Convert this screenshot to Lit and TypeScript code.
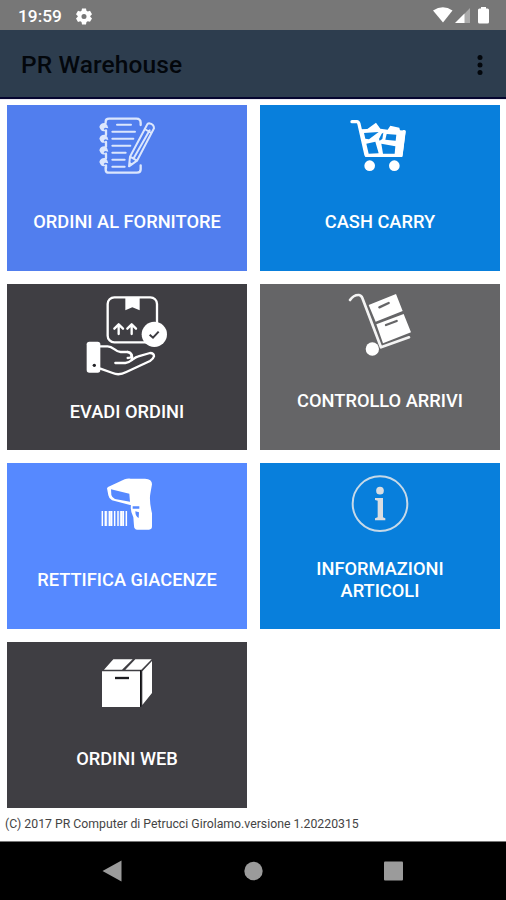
import { LitElement, html, css, svg, TemplateResult } from "lit";
import { customElement } from "lit/decorators.js";
import { classMap } from "lit/directives/class-map.js";

interface Tile {
  label: string;
  tone: string;
  view: string;
  art: TemplateResult;
  low?: boolean;
}

const notebook = svg`
  <g fill="none" stroke="#dbe6fd" stroke-width="7" stroke-linecap="round" stroke-linejoin="round">
    <path d="M77 54V50Q77 41 87 41H169Q182 41 182 54V60M77 188V194Q77 203 87 203H171Q182 203 182 193V181"/>
    <path d="M111 59H153M97 80H165M97 101H160M97 122H151M97 143H137M97 164H134M97 185H134" stroke-width="6"/>
    <path d="M202 58L150 155L147 184L171 167L222 70Q222 57 207 55Q203 55 202 58ZM194 72L214 84M209 76L161 160M150 155L171 167" stroke-width="6"/>
    <path d="M78 76V90M78 111V125M78 146V160M78 181V190"/>
  </g>
  <path d="M147 185L149 171L159 177Z" fill="#dbe6fd"/>
  <g fill="#dbe6fd">
    <path d="M58 66Q61 53 75 54Q83 58 85 70L75 68L71 72L77 77Q64 83 58 66Z"/>
    <path d="M58 101Q61 88 75 89Q83 93 85 105L75 103L71 107L77 112Q64 118 58 101Z"/>
    <path d="M58 136Q61 123 75 124Q83 128 85 140L75 138L71 142L77 147Q64 153 58 136Z"/>
    <path d="M58 171Q61 158 75 159Q83 163 85 175L75 173L71 177L77 182Q64 188 58 171Z"/>
  </g>`;

const cart = svg`
  <path d="M66 50H81Q85 50 87 57L108 150H213L222 80" fill="none" stroke="#fff" stroke-width="10" stroke-linecap="round" stroke-linejoin="round"/>
  <path d="M90 73L112 72L138 53L151 71L173 74L181 62L208 68L210 76L227 77L217 156H106Z" fill="#fff"/>
  <path d="M102 84L146 81L117 103L106 101ZM109 116L136 110L146 145L116 146ZM170 87L199 89L197 107L166 104ZM154 116L196 124L194 146H159ZM155 86L160 83L157 102L149 107L147 102Z" fill="#087fdc"/>
  <circle cx="119" cy="182" r="16" fill="#fff"/><circle cx="193" cy="182" r="16" fill="#fff"/>`;

const handBox = svg`
  <g fill="none" stroke="#fff" stroke-width="7" stroke-linecap="round" stroke-linejoin="round">
    <rect x="98" y="37" width="148" height="135" rx="20"/>
    <path d="M131 147V119M118 131L131 118L144 131M170 147V119M157 131L170 118L183 131"/>
    <path d="M76 184H98C116 184 119 200 137 201H159Q171 205 169 216Q164 219 158 219M121 234H151C170 232 175 217 190 214L225 204Q237 204 237 214Q235 222 225 228L154 261C139 269 126 270 113 264L76 251"/>
    <path d="M158 201Q176 204 170 225" />
  </g>
  <path d="M151 37H194V76L172 67L151 76Z" fill="#fff"/>
  <rect x="35" y="170" width="41" height="93" rx="8" fill="#fff"/>
  <circle cx="58" cy="241" r="5" fill="#222226"/>
  <circle cx="238" cy="148" r="38" fill="#fff"/>
  <path d="M224 149L234 158L251 140" fill="none" stroke="#3b3a3f" stroke-width="6"/>`;

const trolley = svg`
  <path d="M60 45Q71 29 87 30Q94 31 97 39L153 187L237 157" fill="none" stroke="#f4f4f4" stroke-width="8" stroke-linecap="round" stroke-linejoin="round"/>
  <path d="M116 60L198 27L218 78L137 110ZM139 118L221 87L243 142L159 175Z" fill="#fff"/>
  <path d="M148 67L176 54M168 120L200 108" stroke="#656567" stroke-width="7" stroke-linecap="round"/>
  <circle cx="127" cy="192" r="20" fill="#fff"/>`;

const scanner = svg`
  <path d="M84 66L134 43Q142 40 152 41H195Q216 42 216 58L211 86Q207 106 216 145V184Q216 194 207 194H172Q162 193 162 182L160 157Q150 137 153 121L96 106Q87 102 85 91L81 70Z" fill="#fff"/>
  <path d="M93 73L148 86L150 110L105 102Q96 98 94 90ZM158 124H178V131H158ZM166 139L177 142L176 159Q166 155 166 139Z" fill="#5689ff"/>
  <path d="M67 138V183M76 138V183M88 138V183M95 138V183M104 138V183M114 138V183M125 138V183M130 138V183M139 138V183" stroke="#fff" stroke-width="4.5"/>
  <path d="M80 138V183M92 138V183M121 138V183" stroke="#fff" stroke-width="3"/>`;

const info = svg`
  <circle cx="150" cy="116" r="82" fill="none" stroke="#c6d9e8" stroke-width="6"/>
  <circle cx="150" cy="77" r="11.5" fill="#d9dde1"/>
  <path d="M135 99H159V157L166 160V166H135V160L143 157V107L135 105Z" fill="#d9dde1"/>`;

const carton = svg`
  <path d="M66 79H180V186H66ZM100 43H158L126 74H72ZM166 43H215L184 74H136ZM187 79L216 48V144L187 180Z" fill="#fff"/>
  <path d="M182 76V185" stroke="#111114" stroke-width="4"/>
  <path d="M105 99H147" stroke="#1c1c20" stroke-width="7"/>`;

const tiles: Tile[] = [
  { label: "ORDINI AL FORNITORE", tone: "blue", view: "-9 0 300 285", art: notebook },
  { label: "CASH CARRY", tone: "azure", view: "0 0 300 285", art: cart },
  { label: "EVADI ORDINI", tone: "dark", view: "6 -3 300 285", art: handBox, low: true },
  { label: "CONTROLLO ARRIVI", tone: "grey", view: "0 -3 300 285", art: trolley },
  { label: "RETTIFICA GIACENZE", tone: "light", view: "-9 -6 300 285", art: scanner },
  { label: "INFORMAZIONI ARTICOLI", tone: "azure", view: "0 -6 300 285", art: info },
  { label: "ORDINI WEB", tone: "dark", view: "-9 -9 300 285", art: carton },
];

@customElement("app-root")
export class AppRoot extends LitElement {
  static styles = css`
    :host {
      display: flex;
      flex-direction: column;
      height: 900px;
      background: #fff;
      font-family: Roboto, "Noto Sans", sans-serif;
    }
    * { box-sizing: border-box; }
    svg { display: block; flex: none; }
    .status {
      display: flex;
      align-items: center;
      height: 30px;
      padding: 2px 15px 0 18px;
      background: #777;
      color: #fff;
      font-size: 17.3px;
      font-weight: 500;
    }
    .time { width: 58px; white-space: nowrap; }
    .signals { margin-left: auto; }
    .bar {
      display: flex;
      align-items: center;
      justify-content: space-between;
      height: 69px;
      padding: 2px 21px 0 21px;
      background: #2d3d4e;
      border-bottom: 2px solid #05052f;
      color: #03070c;
    }
    .title { font-size: 24.5px; font-weight: 500; letter-spacing: 0.1px; }
    .grid {
      display: grid;
      grid-template-columns: 240px 240px;
      grid-auto-rows: 166px;
      gap: 13px;
      padding: 5px 6px 0 7px;
      border-top: 1px solid #eceaf2;
    }
    .tile {
      display: flex;
      flex-direction: column;
      align-items: center;
      color: #fff;
    }
    .blue { background: #517eee; }
    .azure { background: #087fdc; }
    .dark { background: #3f3e43; }
    .grey { background: #656567; }
    .light { background: #5689ff; }
    .label {
      display: flex;
      align-items: center;
      height: 44px;
      max-width: 200px;
      text-align: center;
      font-size: 18.25px;
      line-height: 22px;
      font-weight: 500;
    }
    .narrow { max-width: 150px; }
    .low { margin-top: 11px; }
    .footer {
      flex: 1;
      padding: 8px 5px 0;
      font-size: 12.28px;
      line-height: 16px;
      color: #444;
      white-space: nowrap;
    }
    .nav {
      display: flex;
      justify-content: center;
      height: 59px;
      border-top: 1px solid #777;
      background: #000;
    }
  `;

  render() {
    return html`
      <div class="status">
        <span class="time">19:59</span>
        <svg width="16" height="17" viewBox="0 0 24 24">
          <path fill="#fff" fill-rule="evenodd" d="M9 0h6l.7 3.400 2 1.100L21 3.400l3 5.100-2.600 2.900v.9L24 15l-3 5-3.300-1-2 1.100L15 24H9l-.7-3.900-2-1.100L3 20.100l-3-5.100 2.600-2.700v-.9L0 8.500l3-5.100 3.300 1.100 2-1.100zM12 8.200a3.800 3.800 0 1 0 0 7.600 3.800 3.800 0 0 0 0-7.600z"/>
        </svg>
        <svg class="signals" width="58" height="18" viewBox="0 0 58 18">
          <path fill="#fff" d="M0 3.500Q10 -3 19.500 3.500L10 15.500Z"/>
          <path fill="#aaa" d="M22.500 16L37 1V16Z"/>
          <path fill="#fff" d="M22 16L31.500 6.500V16Z"/>
          <path fill="#fff" d="M48 0h5v1.500h1.500q1.500 0 1.500 1.500v12q0 1.500-1.500 1.500h-8q-1.500 0-1.500-1.500v-12q0-1.500 1.500-1.500h1.500z"/>
        </svg>
      </div>
      <div class="bar">
        <span class="title">PR Warehouse</span>
        <svg width="10" height="22" viewBox="0 0 10 22">
          <g fill="#03070c"><circle cx="5" cy="3.500" r="2.500"/><circle cx="5" cy="11" r="2.500"/><circle cx="5" cy="18.500" r="2.500"/></g>
        </svg>
      </div>
      <div class="grid">
        ${tiles.map((t) => html`
          <div class=${classMap({ tile: true, [t.tone]: true })}>
            <svg width="100" height="95" viewBox=${t.view}>${t.art}</svg>
            <span class=${classMap({ label: true, low: !!t.low, narrow: t.label.startsWith("INFO") })}>${t.label}</span>
          </div>`)}
      </div>
      <div class="footer">(C) 2017 PR Computer di Petrucci Girolamo.versione 1.20220315</div>
      <div class="nav">
        <svg width="506" height="58" viewBox="0 842 506 58">
          <g fill="#9b9b9b"><path d="M102.500 871L121.500 860.500V881.500Z"/><circle cx="253.500" cy="871" r="9.200"/><rect x="384" y="861.500" width="19" height="19" rx="1"/></g>
        </svg>
      </div>
    `;
  }
}
